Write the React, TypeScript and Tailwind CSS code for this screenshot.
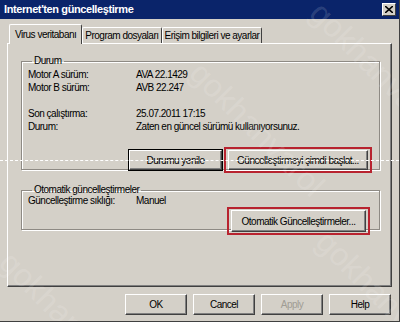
import { ReactNode } from 'react'

const Btn = ({ children, className = '', disabled = false }: { children: ReactNode; className?: string; disabled?: boolean }) => (
  <button
    className={`flex items-center justify-center bg-[#d4d0c8] border border-t-white border-l-white border-r-[#404040] border-b-[#404040] shadow-[inset_-1px_-1px_0_#808080] ${disabled ? 'text-[#a09c94]' : 'text-black'} ${className}`}
  >
    {children}
  </button>
)

const Group = ({ title, className = '', children }: { title: string; className?: string; children: ReactNode }) => (
  <fieldset className={`border border-[#8e8a84] shadow-[inset_1px_1px_0_#fff,1px_1px_0_#fff] px-[6px] ${className}`}>
    <legend className="ml-[4px] px-[2px] leading-[12px]">{title}</legend>
    {children}
  </fieldset>
)

const Row = ({ label, value }: { label: string; value: string }) => (
  <div className="flex h-[13px] items-center">
    <span className="w-[108px] shrink-0">{label}</span>
    <span>{value}</span>
  </div>
)

const tabs = ['Virus veritabanı', 'Program dosyaları', 'Erişim bilgileri ve ayarlar']

export default function App() {
  return (
    <div className="relative h-[322px] w-[400px] overflow-hidden bg-[#d4d0c8] font-['Liberation_Sans',sans-serif] text-[10px] tracking-[-0.5px] text-black border-r border-b border-r-[#404040] border-b-[#404040]">
      <div className="flex h-[19px] items-center justify-between bg-[#0a246a] pl-[4px] pr-[3px]">
        <span className="text-[11px] font-bold tracking-[-0.4px] text-white">Internet'ten güncelleştirme</span>
        <button className="flex h-[13px] w-[14px] items-center justify-center bg-[#d4d0c8] border border-t-white border-l-white border-r-[#404040] border-b-[#404040]">
          <svg width="8" height="7" viewBox="0 0 8 7">
            <path d="M0 0 L8 7 M8 0 L0 7" stroke="#000" strokeWidth="1.6" />
          </svg>
        </button>
      </div>

      <div className="px-[7px] pt-[5px]">
        <div className="flex items-end pl-[2px]">
          {tabs.map((t, i) => (
            <div
              key={t}
              className={`flex items-center border-l border-t border-r border-l-white border-t-white border-r-[#404040] rounded-t-[2px] ${
                i === 0 ? 'relative z-10 -mb-[1px] h-[20px] bg-[#d4d0c8] px-[5px]' : 'h-[16px] px-[2px]'
              }`}
            >
              {t}
            </div>
          ))}
        </div>
        <div className="h-[244px] border border-t-white border-l-white border-r-[#404040] border-b-[#404040] shadow-[inset_-1px_-1px_0_#808080] pl-[13px] pr-[11px] pt-[11px]">
          <Group title="Durum" className="h-[115px]">
            <div className="pt-[1px]">
              <Row label="Motor A sürüm:" value="AVA 22.1429" />
              <Row label="Motor B sürüm:" value="AVB 22.247" />
              <div className="h-[13px]" />
              <Row label="Son çalıştırma:" value="25.07.2011 17:15" />
              <Row label="Durum:" value="Zaten en güncel sürümü kullanıyorsunuz." />
            </div>
            <div className="mt-[14px] flex items-center justify-end gap-[2px] pr-[1px]">
              <Btn className="h-[20px] w-[93px] outline outline-1 outline-black">Durumu yenile</Btn>
              <div className="border-2 border-[#b8232f] px-[2px] py-[1px]">
                <Btn className="h-[20px] w-[140px]">Güncelleştirmeyi şimdi başlat...</Btn>
              </div>
            </div>
          </Group>

          <Group title="Otomatik güncelleştirmeler" className="mt-[14px] h-[46px]">
            <div className="-mt-[2px]">
              <Row label="Güncelleştirme sıklığı:" value="Manuel" />
            </div>
            <div className="flex justify-end pr-[3px]">
              <div className="border-2 border-[#b8232f] px-[2px] py-[1px]">
                <Btn className="h-[22px] w-[135px]">Otomatik Güncelleştirmeler...</Btn>
              </div>
            </div>
          </Group>
        </div>

        <div className="mt-[7px] flex justify-end gap-[6px] pr-[1px]">
          <Btn className="h-[21px] w-[62px]">OK</Btn>
          <Btn className="h-[21px] w-[62px]">Cancel</Btn>
          <Btn className="h-[21px] w-[62px]" disabled>Apply</Btn>
          <Btn className="h-[21px] w-[62px]">Help</Btn>
        </div>
      </div>

      <div className="pointer-events-none absolute left-0 top-[160px] w-full border-t border-dashed border-white" />
      <div className="pointer-events-none absolute inset-0 text-[32px] tracking-normal text-white/15">
        <span className="absolute left-[290px] top-[45px] rotate-45">gokhanvarol</span>
        <span className="absolute left-[170px] top-[105px] rotate-45">gokhanvarol</span>
        <span className="absolute left-[-10px] top-[270px] rotate-45">gokhan</span>
        <span className="absolute left-[300px] top-[265px] rotate-45">gokhanvar</span>
      </div>
    </div>
  )
}
